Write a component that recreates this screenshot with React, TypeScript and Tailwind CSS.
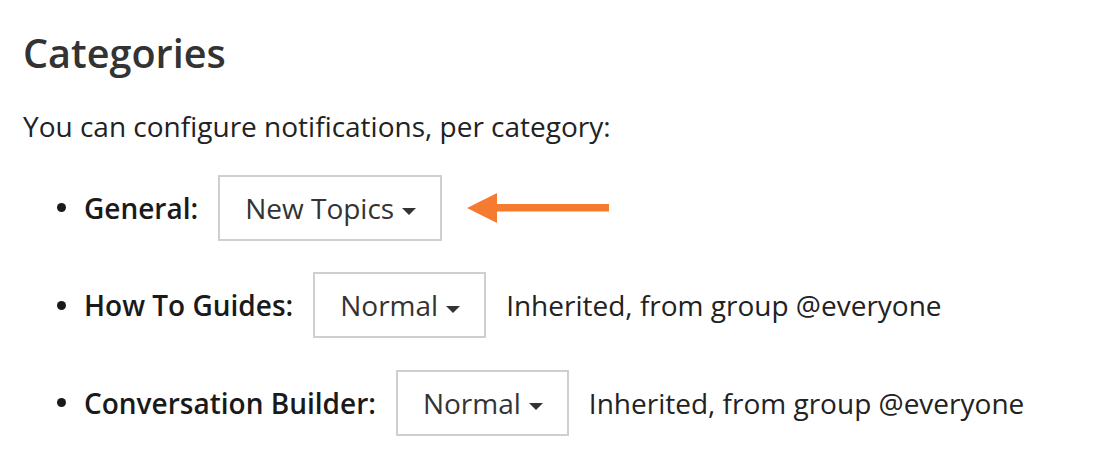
import React from "react";

function Caret() {
  return (
    <svg width="14" height="7" viewBox="0 0 14 7" className="ml-[8px] mt-[8px]">
      <path d="M0 0 L14 0 L7 7 Z" fill="#333333" />
    </svg>
  );
}

function Arrow() {
  return (
    <svg width="143" height="32" viewBox="0 0 143 32" className="ml-[25px]">
      <path d="M0 16 L30 1 L30 12 L142 12 L142 19.5 L30 19.5 L30 31 Z" fill="#f57b30" />
    </svg>
  );
}

function Row({ label, value, note, arrow }: { label: string; value: string; note?: string; arrow?: boolean }) {
  return (
    <li className="flex items-center">
      <span className="w-[9px] h-[9px] rounded-full bg-[#1a1a1a] ml-[34px] mr-[18px]" />
      <span className="font-semibold text-[#1a1a1a]">{label}</span>
      <div className="ml-[20px] flex items-center h-[66px] border-2 border-[#cfcfcf] pl-[25px] pr-[24px] text-[#333]">
        <span>{value}</span>
        <Caret />
      </div>
      {note && <span className="ml-[20px] text-[#222]">{note}</span>}
      {arrow && <Arrow />}
    </li>
  );
}

export default function App() {
  return (
    <div
      className="w-[1102px] h-[458px] bg-white pl-[23px] pt-[30px]"
      style={{ fontFamily: '"Open Sans", sans-serif' }}
    >
      <h1 className="text-[39.6px] leading-[47.5px] font-semibold text-[#333]">Categories</h1>
      <p className="mt-[28px] text-[28px] leading-[40px] text-[#222]">You can configure notifications, per category:</p>
      <ul className="mt-[29px] flex flex-col gap-[31.5px] text-[28px] leading-[38px]">
        <Row label="General:" value="New Topics" arrow />
        <Row label="How To Guides:" value="Normal" note="Inherited, from group @everyone" />
        <Row label="Conversation Builder:" value="Normal" note="Inherited, from group @everyone" />
      </ul>
    </div>
  );
}
